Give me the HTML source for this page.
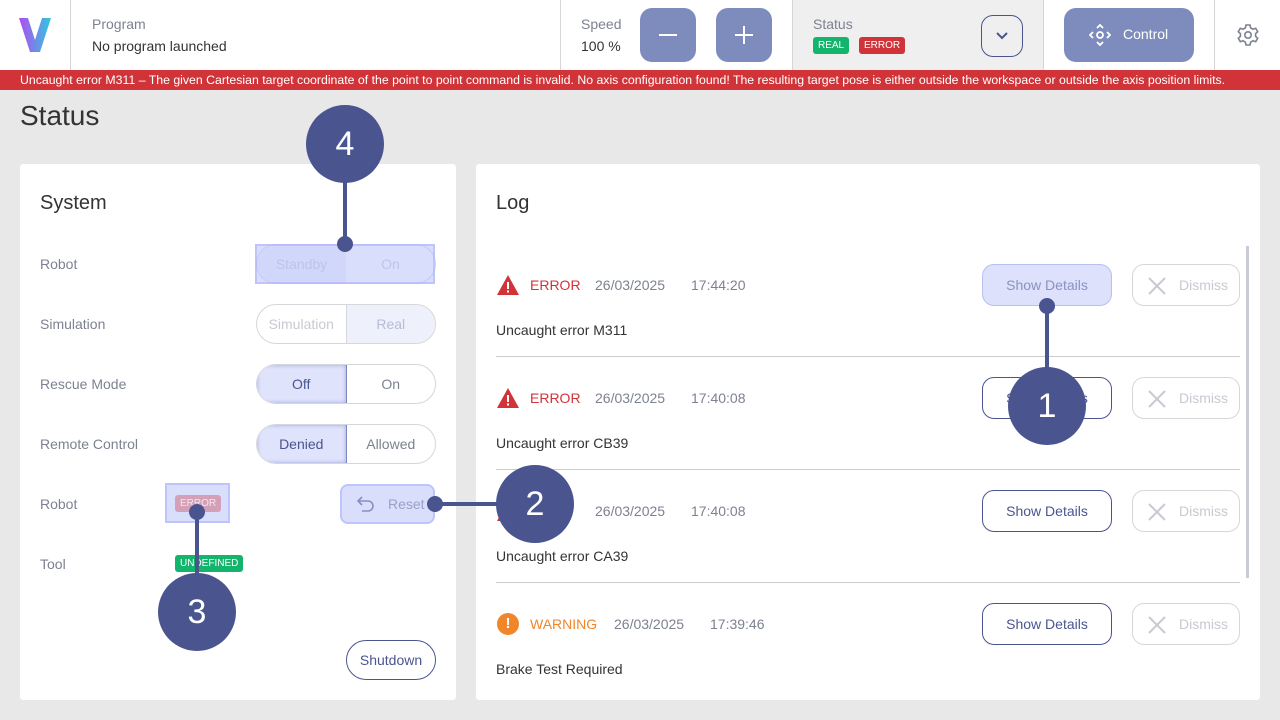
<!DOCTYPE html>
<html><head><meta charset="utf-8"><style>
*{box-sizing:border-box;margin:0;padding:0}
body{width:1280px;height:720px;overflow:hidden;background:#e8e8e8;font-family:"Liberation Sans",sans-serif;position:relative;color:#333}
.a{position:absolute}
.hdr{left:0;top:0;width:1280px;height:70px;background:#fff}
.vl{top:0;width:1px;height:70px;background:#d6d6d6}
.lbl{font-size:14px;color:#7d8290}
.val{font-size:14px;color:#333}
.pb{background:#7e8cbd;border-radius:12px;color:#fff}
.banner{left:0;top:70px;width:1280px;height:20px;background:#d13438;color:#fff;font-size:12.3px;line-height:20px;padding-left:20px;white-space:nowrap}
.card{background:#fff;border-radius:3px}
.tag{font-size:10px;color:#fff;border-radius:3px;padding:0 5px;height:17px;line-height:17px}
.rl{font-size:14px;color:#7d8290}
.seg{height:40px;border:1px solid #d6d6dc;border-radius:20px;display:flex;overflow:hidden;font-size:14px}
.seg div{flex:1;text-align:center;line-height:38px}
.sel{background:#dfe3fb;color:#4a5590;box-shadow:inset 0 0 4px #9aa3d8;border-right:1px solid #7e87bd}
.btn{height:42px;border:1px solid #4a5590;border-radius:12px;font-size:14px;color:#4a5590;text-align:center;line-height:40px;background:#fff}
.dis{height:42px;border:1px solid #d6d6dc;border-radius:12px;font-size:14px;color:#c8cad2;line-height:40px;padding-left:46px;width:108px}
.circ{width:78px;height:78px;border-radius:50%;background:#4a5590;color:#fff;font-size:34px;text-align:center;line-height:78px}
.ln{background:#4a5590}
.dot{width:16px;height:16px;border-radius:50%;background:#4a5590}
.hl{background:rgba(180,190,250,.5);border:2px solid rgba(170,180,250,.6)}
.sep{height:1px;background:#ccc;left:496px;width:744px}
.msg{font-size:14px;color:#333}
.dt{font-size:14px;color:#7d8290}
</style></head><body>
<div class="a hdr"></div>
<svg class="a" style="left:19px;top:18px" width="32" height="34" viewBox="0 0 32 34"><defs><linearGradient id="g" x1="0" x2="1"><stop offset="0" stop-color="#b34cf0"/><stop offset="1" stop-color="#2ec8e0"/></linearGradient></defs><path d="M0 0H9L16 22L23 0H32L21 34H11Z" fill="url(#g)"/></svg>
<div class="a vl" style="left:70px"></div>
<div class="a lbl" style="left:92px;top:16px">Program</div>
<div class="a val" style="left:92px;top:38px">No program launched</div>
<div class="a vl" style="left:560px"></div>
<div class="a lbl" style="left:581px;top:16px">Speed</div>
<div class="a val" style="left:581px;top:38px">100 %</div>
<div class="a pb" style="left:640px;top:8px;width:56px;height:54px"><div class="a" style="left:19px;top:26px;width:18px;height:2px;background:#fff"></div></div>
<div class="a pb" style="left:716px;top:8px;width:56px;height:54px"><div class="a" style="left:19px;top:26px;width:18px;height:2px;background:#fff"></div><div class="a" style="left:27px;top:18px;width:2px;height:18px;background:#fff"></div></div>
<div class="a vl" style="left:792px"></div>
<div class="a" style="left:793px;top:0;width:250px;height:70px;background:#efefef"></div>
<div class="a lbl" style="left:813px;top:16px">Status</div>
<div class="a tag" style="left:813px;top:37px;background:#13b46c">REAL</div>
<div class="a tag" style="left:859px;top:37px;background:#d13438">ERROR</div>
<div class="a" style="left:981px;top:15px;width:42px;height:42px;border:1px solid #4a5590;border-radius:12px"><svg class="a" style="left:13px;top:15px" width="14" height="10"><path d="M2 2L7 7L12 2" stroke="#4a5590" stroke-width="2" fill="none"/></svg></div>
<div class="a vl" style="left:1043px"></div>
<div class="a pb" style="left:1064px;top:8px;width:130px;height:54px"><svg class="a" style="left:25px;top:16px" width="22" height="22" viewBox="0 0 22 22" fill="none" stroke="#fff" stroke-width="1.8"><circle cx="11" cy="11" r="3"/><path d="M8 4L11 1L14 4M8 18L11 21L14 18M4 8L1 11L4 14M18 8L21 11L18 14"/></svg><span class="a" style="left:59px;top:18px;font-size:14px">Control</span></div>
<div class="a vl" style="left:1214px"></div>
<svg class="a" style="left:1236px;top:23px" width="24" height="24" viewBox="0 0 24 24" fill="none" stroke="#7d8290" stroke-width="1.6"><circle cx="12" cy="12" r="3.2"/><path d="M10 2h4l.6 2.8 2.4 1.4 2.7-.9 2 3.4-2.1 1.9v2.8l2.1 1.9-2 3.4-2.7-.9-2.4 1.4L14 22h-4l-.6-2.8-2.4-1.4-2.7.9-2-3.4 2.1-1.9v-2.8L2.3 8.7l2-3.4 2.7.9 2.4-1.4z"/></svg>
<div class="a banner">Uncaught error M311 – The given Cartesian target coordinate of the point to point command is invalid. No axis configuration found! The resulting target pose is either outside the workspace or outside the axis position limits.</div>
<div class="a" style="left:20px;top:100px;font-size:28px;color:#333">Status</div>

<div class="a card" style="left:20px;top:164px;width:436px;height:536px"></div>
<div class="a" style="left:40px;top:192px;font-size:20px;color:#333">System</div>
<div class="a rl" style="left:40px;top:256px">Robot</div>
<div class="a rl" style="left:40px;top:316px">Simulation</div>
<div class="a rl" style="left:40px;top:376px">Rescue Mode</div>
<div class="a rl" style="left:40px;top:436px">Remote Control</div>
<div class="a rl" style="left:40px;top:496px">Robot</div>
<div class="a rl" style="left:40px;top:556px">Tool</div>
<div class="a seg" style="left:256px;top:244px;width:180px;color:#c8cad8"><div style="background:#eef0fb">Standby</div><div>On</div></div>
<div class="a hl" style="left:255px;top:244px;width:180px;height:40px;border-radius:0"></div>
<div class="a seg" style="left:256px;top:304px;width:180px;color:#c8cad2"><div style="border-right:1px solid #d6d6dc">Simulation</div><div style="background:#eef0fb;color:#b8bcd4">Real</div></div>
<div class="a seg" style="left:256px;top:364px;width:180px;color:#555"><div class="sel">Off</div><div style="color:#7d8290">On</div></div>
<div class="a seg" style="left:256px;top:424px;width:180px;color:#555"><div class="sel">Denied</div><div style="color:#7d8290">Allowed</div></div>
<div class="a hl" style="left:165px;top:483px;width:65px;height:40px"></div>
<div class="a tag" style="left:175px;top:495px;background:#d4a0b8;color:#f4e6ee">ERROR</div>
<div class="a hl" style="left:340px;top:484px;width:95px;height:40px;border-radius:8px"></div>
<svg class="a" style="left:357px;top:496px" width="18" height="16" viewBox="0 0 18 16" fill="none" stroke="#8890c0" stroke-width="1.6"><path d="M5 1L1 5L5 9M1 5H11a5 5 0 0 1 0 10H5"/></svg>
<div class="a" style="left:388px;top:496px;font-size:14px;color:#9aa0c8">Reset</div>
<div class="a tag" style="left:175px;top:555px;background:#13b46c">UNDEFINED</div>
<div class="a btn" style="left:346px;top:640px;width:90px;height:40px;line-height:38px;border-radius:20px">Shutdown</div>

<div class="a card" style="left:476px;top:164px;width:784px;height:536px"></div>
<div class="a" style="left:496px;top:192px;font-size:20px;color:#333">Log</div>
<div class="a" style="left:1246px;top:246px;width:3px;height:332px;background:#c8ccd8"></div>

<svg class="a" style="left:496px;top:274px" width="24" height="22"><path d="M12 1L23 21H1Z" fill="#d13438"/><rect x="11" y="8" width="2" height="7" fill="#fff"/><rect x="11" y="16.5" width="2" height="2" fill="#fff"/></svg>
<div class="a" style="left:530px;top:277px;font-size:14px;color:#d13438">ERROR</div>
<div class="a dt" style="left:595px;top:277px">26/03/2025</div><div class="a dt" style="left:691px;top:277px">17:44:20</div>
<div class="a btn" style="left:982px;top:264px;width:130px;background:#dde1fb;border-color:#b8c0f0;color:#8a92c0">Show Details</div>
<div class="a dis" style="left:1132px;top:264px">Dismiss</div>
<div class="a msg" style="left:496px;top:322px">Uncaught error M311</div>
<div class="a sep" style="top:356px"></div>

<svg class="a" style="left:496px;top:387px" width="24" height="22"><path d="M12 1L23 21H1Z" fill="#d13438"/><rect x="11" y="8" width="2" height="7" fill="#fff"/><rect x="11" y="16.5" width="2" height="2" fill="#fff"/></svg>
<div class="a" style="left:530px;top:390px;font-size:14px;color:#d13438">ERROR</div>
<div class="a dt" style="left:595px;top:390px">26/03/2025</div><div class="a dt" style="left:691px;top:390px">17:40:08</div>
<div class="a btn" style="left:982px;top:377px;width:130px">Show Details</div>
<div class="a dis" style="left:1132px;top:377px">Dismiss</div>
<div class="a msg" style="left:496px;top:435px">Uncaught error CB39</div>
<div class="a sep" style="top:469px"></div>

<svg class="a" style="left:496px;top:500px" width="24" height="22"><path d="M12 1L23 21H1Z" fill="#d13438"/></svg>
<div class="a dt" style="left:595px;top:503px">26/03/2025</div><div class="a dt" style="left:691px;top:503px">17:40:08</div>
<div class="a btn" style="left:982px;top:490px;width:130px">Show Details</div>
<div class="a dis" style="left:1132px;top:490px">Dismiss</div>
<div class="a msg" style="left:496px;top:548px">Uncaught error CA39</div>
<div class="a sep" style="top:582px"></div>

<div class="a" style="left:497px;top:613px;width:22px;height:22px;border-radius:50%;background:#f0852a;color:#fff;font-size:15px;font-weight:bold;text-align:center;line-height:22px">!</div>
<div class="a" style="left:530px;top:616px;font-size:14px;color:#f0852a">WARNING</div>
<div class="a dt" style="left:614px;top:616px">26/03/2025</div><div class="a dt" style="left:710px;top:616px">17:39:46</div>
<div class="a btn" style="left:982px;top:603px;width:130px">Show Details</div>
<div class="a dis" style="left:1132px;top:603px">Dismiss</div>
<div class="a msg" style="left:496px;top:661px">Brake Test Required</div>

<svg class="a" style="left:1148px;top:277px" width="18" height="18" stroke="#c8cad2" stroke-width="2"><path d="M1 1L17 17M17 1L1 17"/></svg>
<svg class="a" style="left:1148px;top:390px" width="18" height="18" stroke="#c8cad2" stroke-width="2"><path d="M1 1L17 17M17 1L1 17"/></svg>
<svg class="a" style="left:1148px;top:503px" width="18" height="18" stroke="#c8cad2" stroke-width="2"><path d="M1 1L17 17M17 1L1 17"/></svg>
<svg class="a" style="left:1148px;top:616px" width="18" height="18" stroke="#c8cad2" stroke-width="2"><path d="M1 1L17 17M17 1L1 17"/></svg>

<div class="a ln" style="left:343px;top:180px;width:4px;height:64px"></div>
<div class="a dot" style="left:337px;top:236px"></div>
<div class="a circ" style="left:306px;top:105px">4</div>
<div class="a ln" style="left:1045px;top:306px;width:4px;height:70px"></div>
<div class="a dot" style="left:1039px;top:298px"></div>
<div class="a circ" style="left:1008px;top:367px">1</div>
<div class="a ln" style="left:435px;top:502px;width:70px;height:4px"></div>
<div class="a dot" style="left:427px;top:496px"></div>
<div class="a circ" style="left:496px;top:465px">2</div>
<div class="a ln" style="left:195px;top:512px;width:4px;height:70px"></div>
<div class="a dot" style="left:189px;top:504px"></div>
<div class="a circ" style="left:158px;top:573px">3</div>
</body></html>
